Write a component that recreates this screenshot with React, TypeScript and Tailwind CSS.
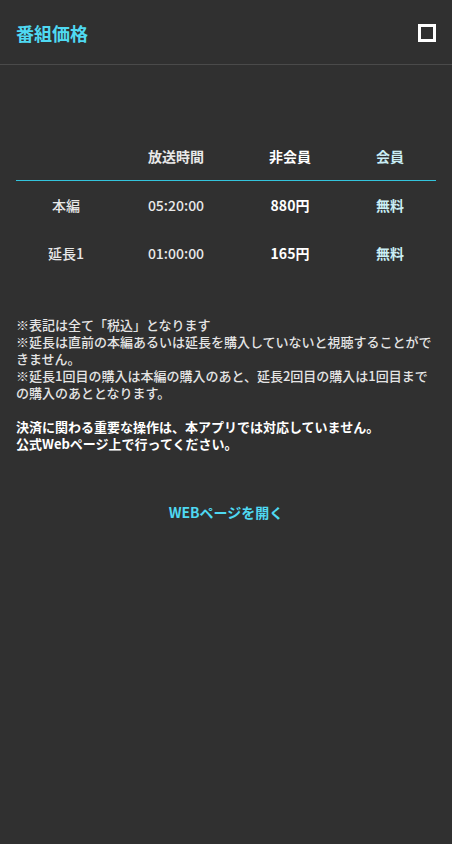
import React from 'react';

const rows = [
  { name: '本編', time: '05:20:00', price: '880円', member: '無料' },
  { name: '延長1', time: '01:00:00', price: '165円', member: '無料' },
];

const cols = 'grid grid-cols-[100px_120px_108px_92px]';

export default function App() {
  return (
    <div
      className="min-h-[844px] w-full bg-[#303030] text-white"
      style={{ fontFamily: '"Noto Sans CJK JP", "Noto Sans", sans-serif' }}
    >
      {/* Header */}
      <header className="flex h-[65px] items-center justify-between border-b border-[#4a4a4a] px-4 pt-[2px]">
        <h1 className="text-[18px] font-bold text-[#4fd9f2]">番組価格</h1>
        <div className="h-[18px] w-[18px] border-[3px] border-white" />
      </header>

      {/* Table */}
      <div className="mx-4 mt-[67px]">
        <div className={`${cols} h-[48px] items-center text-center text-[14px] font-bold`}>
          <div />
          <div className="text-[#e8e8e8]">放送時間</div>
          <div className="text-white">非会員</div>
          <div className="text-[#c9eef5]">会員</div>
        </div>
        <div className="h-px bg-[#33c4dc]" />
        <div className="pb-[3px]">
          {rows.map((r) => (
            <div key={r.name} className={`${cols} h-[48px] items-center text-center text-[14px] font-medium`}>
              <div className="text-[#e8e8e8]">{r.name}</div>
              <div className="text-[#e8e8e8]">{r.time}</div>
              <div className="font-semibold text-white">{r.price}</div>
              <div className="font-bold text-[#c9eef5]">{r.member}</div>
            </div>
          ))}
        </div>
      </div>

      {/* Notes */}
      <div className="mt-[36px] px-4 text-[13px] leading-[17px] font-medium text-[#e4e4e4]">
        <p>※表記は全て「税込」となります</p>
        <p>※延長は直前の本編あるいは延長を購入していないと視聴することができません。</p>
        <p>※延長1回目の購入は本編の購入のあと、延長2回目の購入は1回目までの購入のあととなります。</p>
      </div>
      <div className="mt-[17px] px-4 text-[13px] leading-[17px] font-bold text-white">
        <p>決済に関わる重要な操作は、本アプリでは対応していません。</p>
        <p>公式Webページ上で行ってください。</p>
      </div>

      <div className="mt-[50px] flex justify-center">
        <button className="text-[14px] font-bold text-[#4fd9f2]">WEBページを開く</button>
      </div>
    </div>
  );
}
